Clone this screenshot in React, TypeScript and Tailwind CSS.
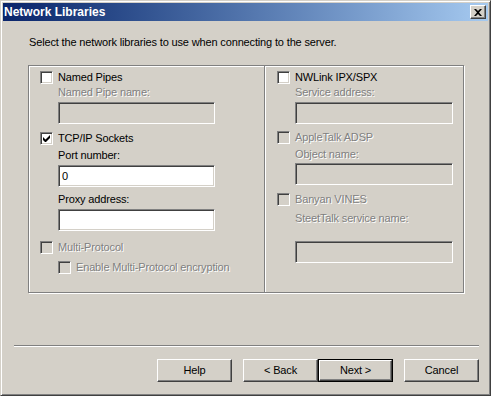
import { ReactNode } from 'react';

const font = 'font-["Liberation_Sans",Arial,sans-serif] text-[11px] leading-[13px] tracking-[-0.15px]';
const sunken =
  'border border-t-[#808080] border-l-[#808080] border-r-white border-b-white shadow-[inset_1px_1px_0_#404040,inset_-1px_-1px_0_#d4d0c8]';
const raised =
  'border border-t-white border-l-white border-r-[#404040] border-b-[#404040] shadow-[inset_-1px_-1px_0_#808080]';
const disabledText = 'text-[#808080] [text-shadow:1px_1px_0_#fff]';

function CheckBox({ label, checked = false, disabled = false }: { label: string; checked?: boolean; disabled?: boolean }) {
  return (
    <div className="flex items-center h-[13px]">
      <div className={`w-[13px] h-[13px] shrink-0 flex items-center justify-center ${sunken} ${disabled ? 'bg-[#d4d0c8]' : 'bg-white'}`}>
        {checked && (
          <svg width="7" height="7" viewBox="0 0 7 7">
            <path d="M0 2v3l2 2h1l4-4V0L2.5 4.5z" fill="#000" />
          </svg>
        )}
      </div>
      <span className={`ml-[5px] ${disabled ? disabledText : 'text-black'}`}>{label}</span>
    </div>
  );
}

function Label({ children, disabled = false, className = '' }: { children: ReactNode; disabled?: boolean; className?: string }) {
  return <div className={`h-[13px] ${disabled ? disabledText : 'text-black'} ${className}`}>{children}</div>;
}

function TextBox({ value = '', disabled = false, className = '' }: { value?: string; disabled?: boolean; className?: string }) {
  return (
    <div className={`h-[22px] w-[157px] ${sunken} ${disabled ? 'bg-[#d4d0c8]' : 'bg-white'} pl-[3px] flex items-center ${className}`}>
      {value}
    </div>
  );
}

function Button({ label, isDefault = false }: { label: string; isDefault?: boolean }) {
  return (
    <div className={`w-[75px] h-[23px] ${isDefault ? 'border border-black' : ''}`}>
      <div className={`w-full h-full bg-[#d4d0c8] flex items-center justify-center ${raised}`}>{label}</div>
    </div>
  );
}

export default function App() {
  return (
    <div className={`w-[491px] h-[396px] bg-[#d4d0c8] ${font} text-black select-none`}>
      <div className="w-full h-full border border-t-[#d4d0c8] border-l-[#d4d0c8] border-r-[#404040] border-b-[#404040] shadow-[inset_1px_1px_0_#fff,inset_-1px_-1px_0_#808080] p-[2px] flex flex-col">
        {/* Title bar */}
        <div className="h-[18px] bg-gradient-to-r from-[#0a246a] to-[#a6caf0] flex items-center justify-between pl-[1px] pr-[2px]">
          <span className="font-bold text-white text-[12px] tracking-[0px]">Network Libraries</span>
          <div className={`w-[16px] h-[14px] bg-[#d4d0c8] flex items-center justify-center ${raised}`}>
            <svg width="8" height="7" viewBox="0 0 8 7">
              <path d="M0 0h2l2 2 2-2h2L5 3.5 8 7H6L4 5 2 7H0l3-3.5z" fill="#000" />
            </svg>
          </div>
        </div>

        <div className="mt-[15px] ml-[26px] h-[13px]">Select the network libraries to use when connecting to the server.</div>

        {/* Group */}
        <div className="mt-[16px] ml-[25px] w-[436px] h-[228px] border border-[#808080] shadow-[inset_1px_1px_0_#fff,1px_1px_0_#fff] flex">
          <div className="w-[235px] pl-[11px] pt-[5px] flex flex-col">
            <CheckBox label="Named Pipes" />
            <Label disabled className="mt-[2px] ml-[18px]">Named Pipe name:</Label>
            <TextBox disabled className="mt-[3px] ml-[18px]" />
            <div className="mt-[8px]"><CheckBox label="TCP/IP Sockets" checked /></div>
            <Label className="mt-[4px] ml-[18px]">Port number:</Label>
            <TextBox value="0" className="mt-[3px] ml-[18px]" />
            <Label className="mt-[6px] ml-[18px]">Proxy address:</Label>
            <TextBox className="mt-[3px] ml-[18px]" />
            <div className="mt-[10px]"><CheckBox label="Multi-Protocol" disabled /></div>
            <div className="mt-[7px] ml-[18px]"><CheckBox label="Enable Multi-Protocol encryption" disabled /></div>
          </div>
          <div className="w-[2px] border-l border-[#808080] shadow-[inset_1px_0_0_#fff]" />
          <div className="flex-1 pl-[11px] pt-[5px] flex flex-col">
            <CheckBox label="NWLink IPX/SPX" />
            <Label disabled className="mt-[2px] ml-[18px]">Service address:</Label>
            <TextBox disabled className="mt-[3px] ml-[18px] !w-[158px]" />
            <div className="mt-[7px]"><CheckBox label="AppleTalk ADSP" disabled /></div>
            <Label disabled className="mt-[4px] ml-[18px]">Object name:</Label>
            <TextBox disabled className="mt-[2px] ml-[18px] !w-[158px]" />
            <div className="mt-[8px]"><CheckBox label="Banyan VINES" disabled /></div>
            <Label disabled className="mt-[6px] ml-[18px]">SteetTalk service name:</Label>
            <TextBox disabled className="mt-[16px] ml-[18px] !w-[158px]" />
          </div>
        </div>

        {/* Separator */}
        <div className="mt-[52px] ml-[11px] w-[465px] h-[2px] border-t border-[#808080] shadow-[inset_0_1px_0_#fff]" />

        {/* Buttons */}
        <div className="mt-[12px] ml-[154px] flex">
          <Button label="Help" />
          <div className="ml-[11px] flex">
            <Button label="< Back" />
            <Button label="Next >" isDefault />
          </div>
          <div className="ml-[11px]">
            <Button label="Cancel" />
          </div>
        </div>
      </div>
    </div>
  );
}
